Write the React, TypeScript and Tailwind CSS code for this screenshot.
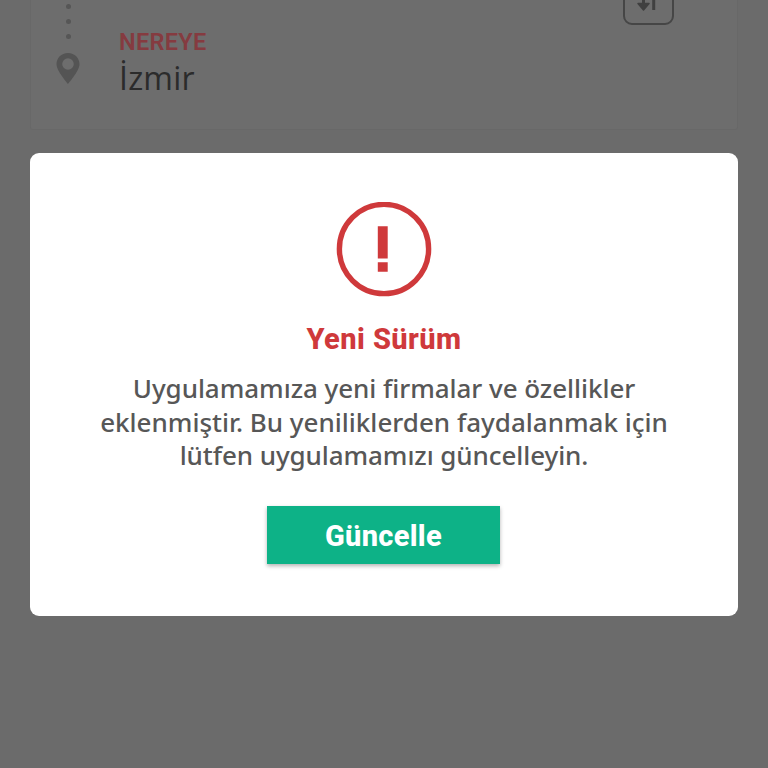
import React from "react";

function SwapButton() {
  return (
    <button type="button" className="-mt-7 h-[53px] w-[51px] rounded-[9px] border-2 border-[#464646]" aria-label="Değiştir">
      <svg className="h-full w-full" viewBox="0 0 47 49" fill="none" aria-hidden="true">
        <path d="M18.5 10V31" stroke="#404040" strokeWidth="3" />
        <path d="M13 29.5H24L18.5 36Z" fill="#404040" stroke="#404040" strokeWidth="1.5" strokeLinejoin="round" />
        <path d="M28.7 16V36" stroke="#404040" strokeWidth="3" />
      </svg>
    </button>
  );
}

function RouteCard() {
  return (
    <section className="mx-[30px] flex h-[130px] justify-between rounded-b-[3px] border-x border-b border-[#686868] bg-[#6d6d6d] pl-[25px] pr-[63px]">
      <div className="flex">
        <div className="flex w-6 flex-col items-center pt-1">
          <div className="flex flex-col gap-[10px]">
            <span className="h-[5px] w-[5px] rounded-full bg-[#565656]" />
            <span className="h-[5px] w-[5px] rounded-full bg-[#565656]" />
            <span className="h-[5px] w-[5px] rounded-full bg-[#565656]" />
          </div>
          <svg className="mt-[14px] h-[31px] w-6 shrink-0" viewBox="0 0 24 31" aria-hidden="true">
            <path fillRule="evenodd" fill="#545454" d="M12 0C5.2 0 .5 5 .5 11.3C.5 18 12 31 12 31S23.5 18 23.5 11.3C23.5 5 18.8 0 12 0ZM12 5.2A5.8 5.8 0 1 1 12 16.8A5.8 5.8 0 1 1 12 5.2Z" />
          </svg>
        </div>
        <div className="ml-[39px] pt-[28px]">
          <p className="font-['Roboto',sans-serif] text-[23.5px] font-semibold leading-[28px] tracking-[0.3px] text-[#853b40]">NEREYE</p>
          <p className="font-['Open_Sans',sans-serif] text-[32px] leading-[44px] tracking-[0.2px] text-[#2b2b2b]">İzmir</p>
        </div>
      </div>
      <SwapButton />
    </section>
  );
}

function UpdateDialog() {
  return (
    <div className="absolute inset-0 px-[30px] pt-[153px]">
      <div role="dialog" className="flex h-[463px] w-[708px] flex-col items-center rounded-[9px] bg-white pt-[49px]">
        <svg className="h-[95px] w-[96px] shrink-0" viewBox="0 0 96 95" aria-hidden="true">
          <circle cx="48" cy="47" r="44.6" fill="none" stroke="#cf393b" strokeWidth="5.4" />
          <path fill="#cf393b" d="M41.8 24.3H51.7V56.5H41.8ZM41.8 60.3H51.7V69.7H41.8Z" />
        </svg>
        <h2 className="mt-[25px] font-['Roboto',sans-serif] text-[29px] font-extrabold leading-[34px] tracking-[0.45px] text-[#cf393b]">Yeni Sürüm</h2>
        <p className="mt-[16px] flex flex-col items-center whitespace-nowrap font-['Noto_Sans',sans-serif] text-[26px] font-medium leading-[33.5px] text-[#575757]">
          <span className="tracking-[-0.05px]">Uygulamamıza yeni firmalar ve özellikler</span>
          <span>eklenmiştir. Bu yeniliklerden faydalanmak için</span>
          <span className="tracking-[-0.08px]">lütfen uygulamamızı güncelleyin.</span>
        </p>
        <button type="button" className="mr-px mt-[33.5px] h-[58px] w-[233px] bg-[#0db287] pt-[3px] font-['Roboto',sans-serif] text-[29px] font-extrabold tracking-[0.3px] text-white shadow-[0_2px_4px_rgba(0,0,0,0.3)]">
          Güncelle
        </button>
      </div>
    </div>
  );
}

function App() {
  return (
    <main className="relative h-[768px] w-[768px] overflow-hidden bg-[#6b6b6b]">
      <RouteCard />
      <UpdateDialog />
    </main>
  );
}

export default App;
